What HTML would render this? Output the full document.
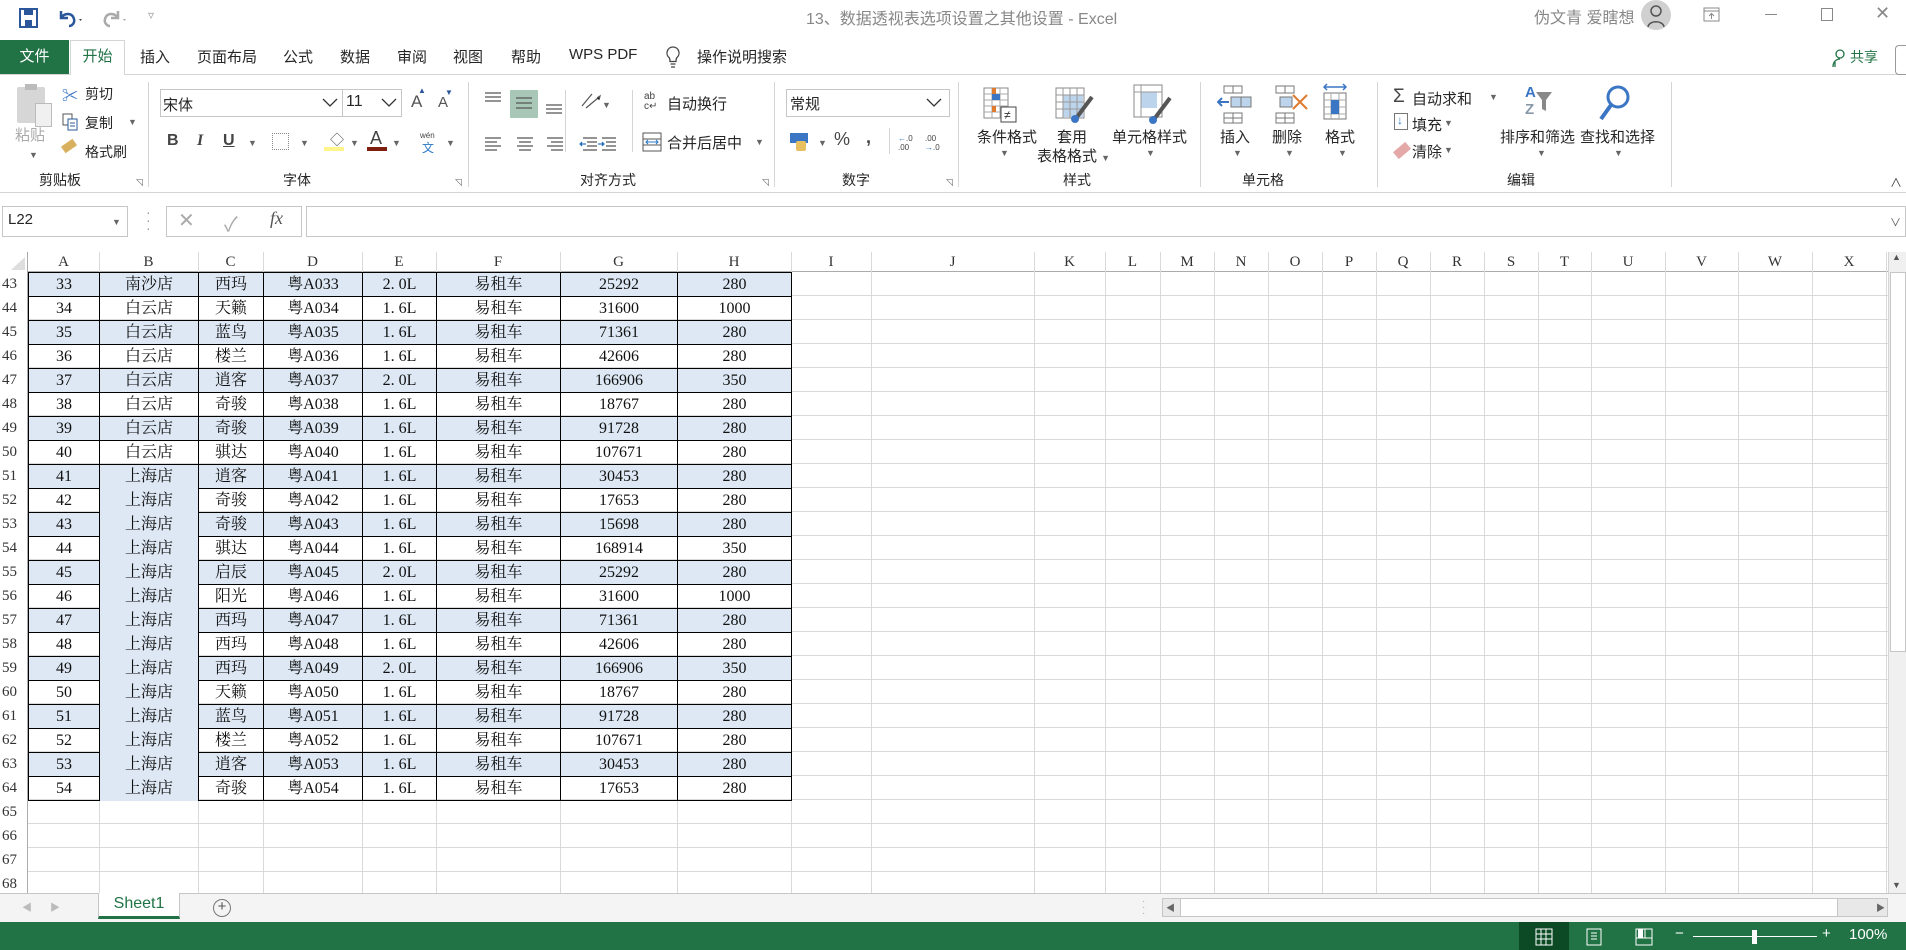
<!DOCTYPE html>
<html><head><meta charset="utf-8"><style>
*{margin:0;padding:0;box-sizing:border-box}
body{width:1906px;height:950px;overflow:hidden;background:#fff;font-family:"Liberation Sans","Noto Sans CJK SC",sans-serif;color:#262626;position:relative}
.a{position:absolute;white-space:nowrap}
.t{font-size:14px}
.sep{position:absolute;width:1px;background:#d5d5d5}
.lbl{position:absolute;top:170px;font-size:14px;color:#262626}
.dd{font-size:9px;color:#666}
.ser{font-family:"Liberation Serif","Noto Serif CJK SC",serif}
table{border-collapse:collapse;table-layout:fixed;position:absolute;left:28px;top:272px}
td{height:24px;padding:0;text-align:center;font-family:"Liberation Serif","Noto Serif CJK SC",serif;font-size:16px;border:1px solid #000;color:#111;line-height:22px}
tr.b td{background:#dde8f4}
td.m{background:#dde8f4!important;border-top:none;border-bottom:none}
.vl{position:absolute;top:252px;height:641px;width:1px;background:#d9d9d9}
.ch{position:absolute;top:252px;height:20px;font-family:"Liberation Serif",serif;font-size:15px;text-align:center;line-height:20px;color:#333}
.rn{position:absolute;left:2px;font-family:"Liberation Serif",serif;font-size:15px;line-height:24px;color:#333}
</style></head><body>

<!-- title bar -->
<svg class="a" style="left:18px;top:7px" width="22" height="22" viewBox="0 0 22 22"><rect x="2" y="2" width="17" height="18" fill="none" stroke="#2b579a" stroke-width="2"/><rect x="6" y="2" width="9" height="6" fill="#2b579a"/><rect x="7" y="13" width="7" height="7" fill="#2b579a"/></svg>
<svg class="a" style="left:55px;top:5px" width="30" height="24" viewBox="0 0 30 24"><path d="M6 6v7h7M6 13c3-5 11-6 13 1 1 4-2 7-5 7" fill="none" stroke="#2b579a" stroke-width="2.5"/><path d="M24 14l3 0-1.5 2z" fill="#444"/></svg>
<svg class="a" style="left:100px;top:5px" width="30" height="24" viewBox="0 0 30 24"><path d="M18 6v7h-7M18 13c-3-5-11-6-13 1-1 4 2 7 5 7" fill="none" stroke="#aaa" stroke-width="2.5"/><path d="M23 14l3 0-1.5 2z" fill="#aaa"/></svg>
<div class="a" style="left:148px;top:8px;font-size:12px;color:#999">▿</div>
<div class="a" style="left:806px;top:5px;font-size:16px;color:#888">13、数据透视表选项设置之其他设置 - Excel</div>
<div class="a" style="left:1534px;top:4px;font-size:16px;color:#888">伪文青 爱瞎想</div>
<div class="a" style="left:1641px;top:0px;width:30px;height:30px;border-radius:50%;background:#d0d0d0"></div>
<svg class="a" style="left:1641px;top:0px" width="30" height="30"><circle cx="15" cy="11" r="5" fill="none" stroke="#555" stroke-width="1.5"/><path d="M7 27c1-7 15-7 16 0" fill="none" stroke="#555" stroke-width="1.5"/></svg>
<svg class="a" style="left:1702px;top:6px" width="20" height="18"><rect x="2" y="2" width="15" height="13" fill="none" stroke="#888"/><path d="M2 5h15M9.5 13V8M7 10l2.5-2.5 2.5 2.5" fill="none" stroke="#888"/></svg>
<div class="a" style="left:1765px;top:14px;width:12px;height:1px;background:#888"></div>
<div class="a" style="left:1821px;top:8px;width:12px;height:13px;border:1px solid #888"></div>
<div class="a" style="left:1875px;top:3px;font-size:18px;color:#888">✕</div>

<!-- tabs -->
<div class="a" style="left:0;top:40px;width:69px;height:34px;background:#217346;color:#fff;font-size:15px;text-align:center;line-height:33px">文件</div>
<div class="a" style="left:70px;top:40px;width:55px;height:35px;border:1px solid #d5d5d5;border-bottom:none;background:#fff;color:#217346;font-size:15px;text-align:center;line-height:32px">开始</div>
<div class="a" style="left:0;top:74px;width:1906px;height:1px;background:#d5d5d5"></div>
<div class="a" style="left:71px;top:74px;width:53px;height:1px;background:#fff"></div>
<div class="a" style="top:46px;left:140px;font-size:15px">插入</div>
<div class="a" style="top:46px;left:197px;font-size:15px">页面布局</div>
<div class="a" style="top:46px;left:283px;font-size:15px">公式</div>
<div class="a" style="top:46px;left:340px;font-size:15px">数据</div>
<div class="a" style="top:46px;left:397px;font-size:15px">审阅</div>
<div class="a" style="top:46px;left:453px;font-size:15px">视图</div>
<div class="a" style="top:46px;left:511px;font-size:15px">帮助</div>
<div class="a" style="top:46px;left:569px;font-size:15px">WPS PDF</div>
<svg class="a" style="left:665px;top:45px" width="16" height="24"><path d="M8 2a6 6 0 0 0-4 10.5c1 1 1 3 1 4h6c0-1 0-3 1-4A6 6 0 0 0 8 2zM5.5 19h5M6 22h4" fill="none" stroke="#444" stroke-width="1.3"/></svg>
<div class="a" style="top:46px;left:697px;font-size:15px">操作说明搜索</div>
<svg class="a" style="left:1832px;top:48px" width="16" height="20"><circle cx="8" cy="6" r="4" fill="none" stroke="#217346" stroke-width="1.3"/><path d="M1 19c0-6 4-8 7-8M3 19V14" fill="none" stroke="#217346" stroke-width="1.3"/></svg>
<div class="a" style="left:1850px;top:47px;font-size:14px;color:#217346">共享</div>
<div class="a" style="left:1895px;top:45px;width:11px;height:30px;border:1px solid #999;border-right:none;border-radius:4px 0 0 4px"></div>

<!-- ribbon -->
<div class="a" style="left:0;top:192px;width:1906px;height:1px;background:#d5d5d5"></div>
<div class="sep" style="left:148px;top:82px;height:105px"></div>
<div class="sep" style="left:468px;top:82px;height:105px"></div>
<div class="sep" style="left:774px;top:82px;height:105px"></div>
<div class="sep" style="left:958px;top:82px;height:105px"></div>
<div class="sep" style="left:1200px;top:82px;height:105px"></div>
<div class="sep" style="left:1377px;top:82px;height:105px"></div>
<div class="sep" style="left:1671px;top:82px;height:105px"></div>

<!-- clipboard -->
<div class="a" style="left:17px;top:87px;width:28px;height:36px;background:#d6d6d6;border-radius:2px"></div>
<div class="a" style="left:25px;top:84px;width:12px;height:6px;background:#bbb"></div>
<div class="a" style="left:35px;top:103px;width:17px;height:24px;background:#f0f0f0;border:1px solid #bbb"></div>
<div class="a" style="left:15px;top:124px;font-size:15px;color:#aaa">粘贴</div>
<div class="a dd" style="left:29px;top:150px">▼</div>
<div class="a" style="left:62px;top:82px;font-size:16px;color:#3a76c4">✂</div>
<div class="a t" style="left:85px;top:84px">剪切</div>
<svg class="a" style="left:62px;top:113px" width="16" height="18"><rect x="1" y="1" width="9" height="11" fill="#fff" stroke="#555"/><rect x="6" y="6" width="9" height="11" fill="#fff" stroke="#2b579a"/><path d="M8 10h5M8 13h5" stroke="#2b579a"/></svg>
<div class="a t" style="left:85px;top:113px">复制</div><div class="a dd" style="left:128px;top:117px">▼</div>
<div class="a" style="left:62px;top:142px;width:14px;height:8px;background:#d9b15e;transform:rotate(-35deg)"></div>
<div class="a t" style="left:85px;top:142px">格式刷</div>
<div class="lbl" style="left:39px">剪贴板</div>
<div class="a" style="left:136px;top:177px;font-size:9px;color:#666">◹</div>

<!-- font -->
<div class="a" style="left:160px;top:89px;width:242px;height:28px;border:1px solid #c6c6c6"></div>
<div class="a" style="left:342px;top:89px;width:1px;height:28px;background:#c6c6c6"></div>
<div class="a t" style="left:163px;top:94px;font-size:15px">宋体</div>
<svg class="a" style="left:322px;top:98px" width="16" height="10"><path d="M1 1l7 7 7-7" fill="none" stroke="#333" stroke-width="1.3"/></svg>
<div class="a" style="left:346px;top:93px;font-size:16px">11</div>
<svg class="a" style="left:381px;top:98px" width="16" height="10"><path d="M1 1l7 7 7-7" fill="none" stroke="#333" stroke-width="1.3"/></svg>
<div class="a" style="left:411px;top:92px;font-size:17px;color:#555">A</div><div class="a" style="left:418px;top:86px;font-size:8px;color:#2b579a">▲</div>
<div class="a" style="left:438px;top:94px;font-size:15px;color:#555">A</div><div class="a" style="left:445px;top:88px;font-size:8px;color:#2b579a">▼</div>
<div class="a" style="left:167px;top:132px;font-size:16px;font-weight:bold;color:#444">B</div>
<div class="a" style="left:197px;top:132px;font-size:16px;font-style:italic;font-weight:bold;color:#444;font-family:'Liberation Serif',serif">I</div>
<div class="a" style="left:223px;top:132px;font-size:16px;text-decoration:underline;font-weight:bold;color:#444">U</div>
<div class="a dd" style="left:248px;top:138px">▼</div>
<div class="a" style="left:272px;top:133px;width:17px;height:17px;border:1px dotted #888"></div>
<div class="a dd" style="left:300px;top:138px">▼</div>
<div class="a" style="left:330px;top:130px;font-size:14px;color:#555">◇</div>
<div class="a" style="left:324px;top:147px;width:20px;height:4px;background:#fff58a"></div>
<div class="a dd" style="left:350px;top:138px">▼</div>
<div class="a" style="left:370px;top:128px;font-size:18px;color:#444">A</div>
<div class="a" style="left:367px;top:147px;width:20px;height:4px;background:#7e1e0e"></div>
<div class="a dd" style="left:392px;top:138px">▼</div>
<div class="a" style="left:420px;top:131px;font-size:8px;color:#444">wén</div>
<div class="a" style="left:422px;top:139px;font-size:12px;color:#2b79c4">文</div>
<div class="a dd" style="left:446px;top:138px">▼</div>
<div class="lbl" style="left:283px">字体</div>
<div class="a" style="left:455px;top:177px;font-size:9px;color:#666">◹</div>

<!-- alignment -->
<svg class="a" style="left:483px;top:88px" width="130" height="70" stroke="#555" stroke-width="1.2">
<path d="M2 5h16M2 9h16M2 13h16"/>
<rect x="27" y="2" width="28" height="28" fill="#a9c7b6" stroke="none"/>
<path d="M33 10h16M33 15h16M33 20h16"/>
<path d="M63 17h16M63 21h16M63 25h16"/>
<path d="M2 50h16M2 54h12M2 58h16M2 62h12"/><path d="M34 50h16M36 54h12M34 58h16M36 62h12"/><path d="M64 50h16M68 54h12M64 58h16M68 62h12"/>
<path d="M100 50h14M104 54h10M104 58h10M100 62h14"/><path d="M103 56h-6m2-2-2 2 2 2" stroke="#2b79c4"/>
</svg>
<svg class="a" style="left:578px;top:88px" width="40" height="70" stroke="#555" stroke-width="1.2"><path d="M4 18l10-12M8 20l12-10" /><path d="M19 10l3-2-1 4" stroke="#555"/><path d="M24 50h14M28 54h10M28 58h10M24 62h14"/><path d="M20 56h6m-2-2 2 2-2 2" stroke="#2b79c4"/></svg>
<div class="a dd" style="left:602px;top:100px">▼</div>
<div class="sep" style="left:565px;top:90px;height:62px"></div>
<div class="sep" style="left:632px;top:90px;height:62px"></div>
<div class="a" style="left:644px;top:92px;font-size:10px;color:#444;line-height:10px">ab<br>c↵</div>
<div class="a t" style="left:667px;top:93px;font-size:15px">自动换行</div>
<svg class="a" style="left:642px;top:132px" width="20" height="20"><rect x="1" y="1" width="18" height="18" fill="none" stroke="#555"/><path d="M1 7h18M1 13h18" stroke="#555"/><path d="M4 10h12M6 8l-2 2 2 2M14 8l2 2-2 2" stroke="#2b79c4" fill="none"/></svg>
<div class="a t" style="left:667px;top:132px;font-size:15px">合并后居中</div>
<div class="a dd" style="left:755px;top:137px">▼</div>
<div class="lbl" style="left:580px">对齐方式</div>
<div class="a" style="left:762px;top:177px;font-size:9px;color:#666">◹</div>

<!-- number -->
<div class="a" style="left:786px;top:89px;width:164px;height:28px;border:1px solid #c6c6c6"></div>
<div class="a" style="left:790px;top:93px;font-size:15px">常规</div>
<svg class="a" style="left:926px;top:98px" width="16" height="10"><path d="M1 1l7 7 7-7" fill="none" stroke="#333" stroke-width="1.3"/></svg>
<div class="a" style="left:790px;top:133px;width:18px;height:10px;background:#3a76c4"></div>
<div class="a" style="left:796px;top:141px;width:10px;height:10px;background:#e8c060;border-radius:2px"></div>
<div class="a dd" style="left:818px;top:138px">▼</div>
<div class="a" style="left:834px;top:129px;font-size:18px;color:#444">%</div>
<div class="a" style="left:866px;top:127px;font-size:18px;font-weight:bold;color:#444">,</div>
<div class="sep" style="left:889px;top:128px;height:26px"></div>
<div class="a" style="left:898px;top:134px;font-size:8px;line-height:9px;color:#444"><span style="color:#2b79c4">←</span>.0<br>.00</div>
<div class="a" style="left:925px;top:134px;font-size:8px;line-height:9px;color:#444">.00<br><span style="color:#2b79c4">→</span>.0</div>
<div class="lbl" style="left:842px">数字</div>
<div class="a" style="left:946px;top:177px;font-size:9px;color:#666">◹</div>

<!-- styles -->
<svg class="a" style="left:983px;top:87px" width="40" height="40"><g stroke="#888" fill="#fff"><rect x="1" y="1" width="24" height="30"/></g><path d="M1 7h24M1 13h24M1 19h24M1 25h24M9 1v30M17 1v30" stroke="#aaa"/><rect x="9" y="1" width="4" height="12" fill="#e07b2e"/><rect x="9" y="7" width="8" height="6" fill="#3a76c4"/><rect x="9" y="19" width="4" height="6" fill="#e07b2e"/><rect x="18" y="20" width="15" height="15" fill="#fff" stroke="#444"/><text x="21" y="32" font-size="12" fill="#333">≠</text></svg>
<div class="a t" style="left:977px;top:126px;font-size:15px">条件格式</div><div class="a dd" style="left:1000px;top:148px">▼</div>
<svg class="a" style="left:1055px;top:87px" width="40" height="40"><rect x="1" y="1" width="28" height="30" fill="#fff" stroke="#888"/><rect x="8" y="8" width="20" height="22" fill="#bcd4ec"/><path d="M1 8h28M1 15h28M1 22h28M8 1v30M15 1v30M22 1v30" stroke="#999"/><path d="M37 10L22 30" stroke="#555" stroke-width="4"/><circle cx="20" cy="32" r="4" fill="#3a76c4"/></svg>
<div class="a t" style="left:1057px;top:126px;font-size:15px">套用</div>
<div class="a t" style="left:1037px;top:145px;font-size:15px">表格格式 <span class="dd">▼</span></div>
<svg class="a" style="left:1133px;top:84px" width="40" height="44"><rect x="1" y="1" width="28" height="32" fill="#fff" stroke="#888"/><rect x="8" y="8" width="16" height="16" fill="#bcd4ec"/><path d="M1 8h28M8 1v32" stroke="#999"/><path d="M37 14L22 34" stroke="#555" stroke-width="4"/><circle cx="20" cy="36" r="4" fill="#3a76c4"/></svg>
<div class="a t" style="left:1112px;top:126px;font-size:15px">单元格样式</div><div class="a dd" style="left:1146px;top:148px">▼</div>
<div class="lbl" style="left:1063px">样式</div>

<!-- cells -->
<svg class="a" style="left:1217px;top:85px" width="36" height="40"><g fill="none" stroke="#777"><rect x="7" y="1" width="18" height="7"/><rect x="7" y="28" width="18" height="10"/><path d="M16 1v7M7 33h18M16 28v10"/><rect x="14" y="12" width="20" height="10" fill="#bcd4ec"/><path d="M24 12v10"/></g><path d="M12 17H1m4-4-4 4 4 4" stroke="#3a76c4" stroke-width="2" fill="none"/></svg>
<div class="a t" style="left:1220px;top:126px;font-size:15px">插入</div><div class="a dd" style="left:1233px;top:148px">▼</div>
<svg class="a" style="left:1275px;top:85px" width="36" height="40"><g fill="none" stroke="#777"><rect x="1" y="1" width="18" height="7"/><rect x="1" y="28" width="18" height="10"/><path d="M10 1v7M1 33h18M10 28v10"/><rect x="5" y="12" width="12" height="10" fill="#bcd4ec"/></g><path d="M18 10l14 14M32 10L18 24" stroke="#e07b2e" stroke-width="2"/></svg>
<div class="a t" style="left:1272px;top:126px;font-size:15px">删除</div><div class="a dd" style="left:1285px;top:148px">▼</div>
<svg class="a" style="left:1323px;top:83px" width="36" height="42"><path d="M1 4h22M4 1l-3 3 3 3M20 1l3 3-3 3" stroke="#3a76c4" fill="none" stroke-width="1.5"/><rect x="1" y="10" width="22" height="26" fill="#fff" stroke="#777"/><path d="M1 17h22M1 24h22M1 31h22M8 10v26M16 10v26" stroke="#aaa"/><rect x="8" y="17" width="8" height="14" fill="#3a76c4"/></svg>
<div class="a t" style="left:1325px;top:126px;font-size:15px">格式</div><div class="a dd" style="left:1338px;top:148px">▼</div>
<div class="lbl" style="left:1242px">单元格</div>

<!-- editing -->
<div class="a" style="left:1393px;top:86px;font-size:19px;color:#444">Σ</div>
<div class="a t" style="left:1412px;top:88px;font-size:15px">自动求和</div><div class="a dd" style="left:1489px;top:92px">▼</div>
<div class="a" style="left:1394px;top:113px;width:14px;height:17px;border:1px solid #777;background:#fff"></div><div class="a" style="left:1397px;top:113px;font-size:12px;color:#2b79c4">↓</div>
<div class="a t" style="left:1412px;top:114px;font-size:15px">填充</div><div class="a dd" style="left:1444px;top:118px">▼</div>
<div class="a" style="left:1394px;top:146px;width:16px;height:9px;background:#e4a8a8;transform:rotate(-40deg)"></div>
<div class="a t" style="left:1412px;top:141px;font-size:15px">清除</div><div class="a dd" style="left:1444px;top:145px">▼</div>
<div class="a" style="left:1525px;top:84px;font-size:15px;color:#3a76c4;font-weight:bold">A</div>
<div class="a" style="left:1525px;top:101px;font-size:15px;color:#8899aa;font-weight:bold">Z</div>
<svg class="a" style="left:1535px;top:91px" width="18" height="22"><path d="M1 1h16l-6 8v11l-4-2V9z" fill="#888"/></svg>
<div class="a t" style="left:1500px;top:126px;font-size:15px">排序和筛选</div><div class="a dd" style="left:1537px;top:148px">▼</div>
<svg class="a" style="left:1598px;top:84px" width="34" height="40"><circle cx="20" cy="13" r="10" fill="none" stroke="#3a76c4" stroke-width="3"/><path d="M13 21L3 35" stroke="#3a76c4" stroke-width="4"/></svg>
<div class="a t" style="left:1580px;top:126px;font-size:15px">查找和选择</div><div class="a dd" style="left:1614px;top:148px">▼</div>
<div class="lbl" style="left:1507px">编辑</div>
<div class="a" style="left:1890px;top:174px;font-size:12px;color:#444">∧</div>

<!-- formula bar -->
<div class="a" style="left:2px;top:206px;width:126px;height:31px;border:1px solid #c6c6c6"></div>
<div class="a" style="left:8px;top:211px;font-size:15px">L22</div>
<div class="a dd" style="left:112px;top:217px">▼</div>
<div class="a" style="left:146px;top:208px;font-size:14px;color:#999;line-height:8px">·<br>·<br>·</div>
<div class="a" style="left:166px;top:206px;width:136px;height:31px;border:1px solid #c6c6c6"></div>
<div class="a" style="left:178px;top:208px;font-size:20px;color:#aaa">✕</div>
<div class="a" style="left:224px;top:208px;font-size:20px;color:#aaa">✓</div>
<div class="a" style="left:270px;top:208px;font-size:18px;color:#555;font-style:italic;font-family:'Liberation Serif',serif">fx</div>
<div class="a" style="left:306px;top:206px;width:1600px;height:31px;border:1px solid #c6c6c6"></div>
<div class="a" style="left:1890px;top:214px;font-size:11px;color:#555">∨</div>

<!-- sheet grid -->
<div class="a" style="left:0;top:272px;width:1888px;height:621px;background:repeating-linear-gradient(to bottom,transparent 0 23px,#d9d9d9 23px 24px)"></div>
<div class="a" style="left:0;top:252px;width:1888px;height:20px;background:#fff;border-bottom:1px solid #ababab"></div>
<div class="a" style="left:0;top:252px;width:28px;height:641px;border-right:1px solid #ababab;background:#fff"></div>
<svg class="a" style="left:8px;top:256px" width="18" height="15"><path d="M17 1V14H3z" fill="#dedede"/></svg>
<div class="vl" style="left:99px"></div><div class="vl" style="left:198px"></div><div class="vl" style="left:263px"></div><div class="vl" style="left:362px"></div><div class="vl" style="left:436px"></div><div class="vl" style="left:560px"></div><div class="vl" style="left:677px"></div><div class="vl" style="left:791px"></div><div class="vl" style="left:871px"></div><div class="vl" style="left:1034px"></div><div class="vl" style="left:1105px"></div><div class="vl" style="left:1160px"></div><div class="vl" style="left:1214px"></div><div class="vl" style="left:1268px"></div><div class="vl" style="left:1322px"></div><div class="vl" style="left:1376px"></div><div class="vl" style="left:1430px"></div><div class="vl" style="left:1484px"></div><div class="vl" style="left:1538px"></div><div class="vl" style="left:1591px"></div><div class="vl" style="left:1665px"></div><div class="vl" style="left:1738px"></div><div class="vl" style="left:1812px"></div><div class="vl" style="left:1886px"></div>

<div class="ch" style="left:28px;width:71px">A</div><div class="ch" style="left:99px;width:99px">B</div><div class="ch" style="left:198px;width:65px">C</div><div class="ch" style="left:263px;width:99px">D</div><div class="ch" style="left:362px;width:74px">E</div><div class="ch" style="left:436px;width:124px">F</div><div class="ch" style="left:560px;width:117px">G</div><div class="ch" style="left:677px;width:114px">H</div><div class="ch" style="left:791px;width:80px">I</div><div class="ch" style="left:871px;width:163px">J</div><div class="ch" style="left:1034px;width:71px">K</div><div class="ch" style="left:1105px;width:55px">L</div><div class="ch" style="left:1160px;width:54px">M</div><div class="ch" style="left:1214px;width:54px">N</div><div class="ch" style="left:1268px;width:54px">O</div><div class="ch" style="left:1322px;width:54px">P</div><div class="ch" style="left:1376px;width:54px">Q</div><div class="ch" style="left:1430px;width:54px">R</div><div class="ch" style="left:1484px;width:54px">S</div><div class="ch" style="left:1538px;width:53px">T</div><div class="ch" style="left:1591px;width:74px">U</div><div class="ch" style="left:1665px;width:73px">V</div><div class="ch" style="left:1738px;width:74px">W</div><div class="ch" style="left:1812px;width:74px">X</div>

<div class="rn" style="top:272px">43</div><div class="rn" style="top:296px">44</div><div class="rn" style="top:320px">45</div><div class="rn" style="top:344px">46</div><div class="rn" style="top:368px">47</div><div class="rn" style="top:392px">48</div><div class="rn" style="top:416px">49</div><div class="rn" style="top:440px">50</div><div class="rn" style="top:464px">51</div><div class="rn" style="top:488px">52</div><div class="rn" style="top:512px">53</div><div class="rn" style="top:536px">54</div><div class="rn" style="top:560px">55</div><div class="rn" style="top:584px">56</div><div class="rn" style="top:608px">57</div><div class="rn" style="top:632px">58</div><div class="rn" style="top:656px">59</div><div class="rn" style="top:680px">60</div><div class="rn" style="top:704px">61</div><div class="rn" style="top:728px">62</div><div class="rn" style="top:752px">63</div><div class="rn" style="top:776px">64</div><div class="rn" style="top:800px">65</div><div class="rn" style="top:824px">66</div><div class="rn" style="top:848px">67</div><div class="rn" style="top:872px">68</div>

<table>
<colgroup><col style="width:71px"><col style="width:99px"><col style="width:65px"><col style="width:99px"><col style="width:74px"><col style="width:124px"><col style="width:117px"><col style="width:114px"></colgroup>
<tr class="b"><td>33</td><td>南沙店</td><td>西玛</td><td>粤A033</td><td>2. 0L</td><td>易租车</td><td>25292</td><td>280</td></tr>
<tr><td>34</td><td>白云店</td><td>天籁</td><td>粤A034</td><td>1. 6L</td><td>易租车</td><td>31600</td><td>1000</td></tr>
<tr class="b"><td>35</td><td>白云店</td><td>蓝鸟</td><td>粤A035</td><td>1. 6L</td><td>易租车</td><td>71361</td><td>280</td></tr>
<tr><td>36</td><td>白云店</td><td>楼兰</td><td>粤A036</td><td>1. 6L</td><td>易租车</td><td>42606</td><td>280</td></tr>
<tr class="b"><td>37</td><td>白云店</td><td>逍客</td><td>粤A037</td><td>2. 0L</td><td>易租车</td><td>166906</td><td>350</td></tr>
<tr><td>38</td><td>白云店</td><td>奇骏</td><td>粤A038</td><td>1. 6L</td><td>易租车</td><td>18767</td><td>280</td></tr>
<tr class="b"><td>39</td><td>白云店</td><td>奇骏</td><td>粤A039</td><td>1. 6L</td><td>易租车</td><td>91728</td><td>280</td></tr>
<tr><td>40</td><td>白云店</td><td>骐达</td><td>粤A040</td><td>1. 6L</td><td>易租车</td><td>107671</td><td>280</td></tr>
<tr class="b"><td>41</td><td class="m" style="border-top:1px solid #000">上海店</td><td>逍客</td><td>粤A041</td><td>1. 6L</td><td>易租车</td><td>30453</td><td>280</td></tr>
<tr><td>42</td><td class="m">上海店</td><td>奇骏</td><td>粤A042</td><td>1. 6L</td><td>易租车</td><td>17653</td><td>280</td></tr>
<tr class="b"><td>43</td><td class="m">上海店</td><td>奇骏</td><td>粤A043</td><td>1. 6L</td><td>易租车</td><td>15698</td><td>280</td></tr>
<tr><td>44</td><td class="m">上海店</td><td>骐达</td><td>粤A044</td><td>1. 6L</td><td>易租车</td><td>168914</td><td>350</td></tr>
<tr class="b"><td>45</td><td class="m">上海店</td><td>启辰</td><td>粤A045</td><td>2. 0L</td><td>易租车</td><td>25292</td><td>280</td></tr>
<tr><td>46</td><td class="m">上海店</td><td>阳光</td><td>粤A046</td><td>1. 6L</td><td>易租车</td><td>31600</td><td>1000</td></tr>
<tr class="b"><td>47</td><td class="m">上海店</td><td>西玛</td><td>粤A047</td><td>1. 6L</td><td>易租车</td><td>71361</td><td>280</td></tr>
<tr><td>48</td><td class="m">上海店</td><td>西玛</td><td>粤A048</td><td>1. 6L</td><td>易租车</td><td>42606</td><td>280</td></tr>
<tr class="b"><td>49</td><td class="m">上海店</td><td>西玛</td><td>粤A049</td><td>2. 0L</td><td>易租车</td><td>166906</td><td>350</td></tr>
<tr><td>50</td><td class="m">上海店</td><td>天籁</td><td>粤A050</td><td>1. 6L</td><td>易租车</td><td>18767</td><td>280</td></tr>
<tr class="b"><td>51</td><td class="m">上海店</td><td>蓝鸟</td><td>粤A051</td><td>1. 6L</td><td>易租车</td><td>91728</td><td>280</td></tr>
<tr><td>52</td><td class="m">上海店</td><td>楼兰</td><td>粤A052</td><td>1. 6L</td><td>易租车</td><td>107671</td><td>280</td></tr>
<tr class="b"><td>53</td><td class="m">上海店</td><td>逍客</td><td>粤A053</td><td>1. 6L</td><td>易租车</td><td>30453</td><td>280</td></tr>
<tr><td>54</td><td class="m" style="border-left:none">上海店</td><td>奇骏</td><td>粤A054</td><td>1. 6L</td><td>易租车</td><td>17653</td><td>280</td></tr>
</table>

<!-- vertical scrollbar -->
<div class="a" style="left:1888px;top:252px;width:18px;height:641px;background:#f0f0f0;border-left:1px solid #d5d5d5"></div>
<div class="a" style="left:1890px;top:272px;width:16px;height:380px;background:#fff;border:1px solid #c6c6c6"></div>
<div class="a" style="left:1892px;top:252px;font-size:9px;color:#555">▲</div>
<div class="a" style="left:1892px;top:880px;font-size:9px;color:#555">▼</div>

<!-- sheet tabs -->
<div class="a" style="left:0;top:893px;width:1906px;height:29px;background:#f5f4f4;border-top:1px solid #c6c6c6"></div>
<div class="a" style="left:22px;top:899px;font-size:10px;color:#bbb">◀</div>
<div class="a" style="left:50px;top:899px;font-size:10px;color:#bbb">▶</div>
<div class="a" style="left:98px;top:893px;width:82px;height:26px;background:#fff;border:1px solid #c6c6c6;border-top:none;border-bottom:3px solid #217346;color:#217346;font-size:16px;text-align:center;line-height:22px">Sheet1</div>
<div class="a" style="left:213px;top:899px;width:18px;height:18px;border:1.5px solid #777;border-radius:50%;font-size:15px;line-height:14px;text-align:center;color:#555">+</div>
<div class="a" style="left:1142px;top:899px;font-size:10px;color:#aaa;line-height:6px">·<br>·<br>·</div>
<div class="a" style="left:1162px;top:898px;width:726px;height:19px;background:#e8e8e8;border:1px solid #c6c6c6"></div>
<div class="a" style="left:1180px;top:899px;width:658px;height:17px;background:#fff;border-left:1px solid #c6c6c6;border-right:1px solid #c6c6c6"></div>
<div class="a" style="left:1166px;top:901px;font-size:9px;color:#666">◀</div>
<div class="a" style="left:1876px;top:901px;font-size:9px;color:#666">▶</div>

<!-- status bar -->
<div class="a" style="left:0;top:922px;width:1906px;height:28px;background:#217346"></div>
<div class="a" style="left:1519px;top:922px;width:50px;height:28px;background:#0c4a26"></div>
<svg class="a" style="left:1535px;top:928px" width="18" height="18"><path d="M1 1h16v16H1zM1 6h16M1 11h16M6 1v16M11 1v16" fill="none" stroke="#fff"/></svg>
<svg class="a" style="left:1585px;top:928px" width="18" height="18"><rect x="2" y="1" width="14" height="16" fill="none" stroke="#fff"/><path d="M6 5h6M6 8h6M6 11h6" stroke="#fff"/></svg>
<svg class="a" style="left:1635px;top:928px" width="18" height="18"><rect x="1" y="1" width="16" height="16" fill="none" stroke="#fff"/><rect x="3" y="1" width="5" height="9" fill="#fff"/><path d="M10 1v9M1 10h16" stroke="#fff"/></svg>
<div class="a" style="left:1675px;top:925px;color:#fff;font-size:15px">−</div>
<div class="a" style="left:1693px;top:936px;width:124px;height:1px;background:#fff"></div>
<div class="a" style="left:1752px;top:930px;width:5px;height:14px;background:#fff"></div>
<div class="a" style="left:1822px;top:925px;color:#fff;font-size:15px">+</div>
<div class="a" style="left:1849px;top:926px;color:#fff;font-size:15px">100%</div>
</body></html>
